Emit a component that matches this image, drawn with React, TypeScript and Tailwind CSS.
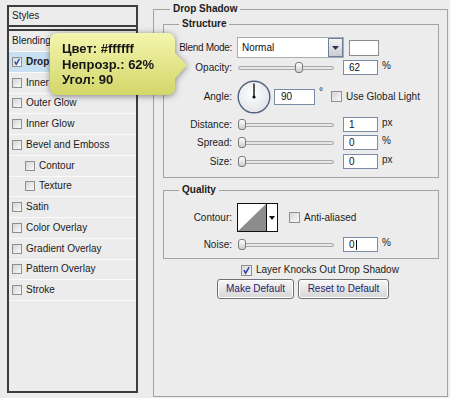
import React from "react";

const Check = ({ checked = false, small = false }: { checked?: boolean; small?: boolean }) => (
  <div
    className={
      small
        ? "relative shrink-0 w-[10px] h-[10px] border border-[#8e8f8f] bg-gradient-to-br from-[#d6d6d6] to-[#f9f9f9]"
        : "relative shrink-0 w-[11px] h-[11px] border border-[#8e8f8f] bg-gradient-to-br from-[#d6d6d6] to-[#f9f9f9]"
    }
  >
    {checked && (
      <svg viewBox="0 0 10 10" className="absolute inset-0 w-full h-full">
        <path d="M2.2 4.6 L4 8 L8 1.2" fill="none" stroke="#2a44a8" strokeWidth="1.7" />
      </svg>
    )}
  </div>
);

const Slider = ({ pos }: { pos: number }) => (
  <div className="relative w-[96px] h-[11px] shrink-0">
    <div className="absolute left-0 right-0 top-[4px] h-[4px] rounded-full border border-[#a9a9a9] bg-[#e6e6e6]" />
    <div
      className="absolute top-0 w-[8px] h-[11px] rounded-[3px] border border-[#7a7a7a] bg-gradient-to-b from-white to-[#cdcdcd]"
      style={{ left: pos }}
    />
  </div>
);

const Field = ({ children, cls }: { children: React.ReactNode; cls: string }) => (
  <div className={`shrink-0 border border-[#7b8ba5] bg-white flex items-center text-[#111] ${cls}`}>{children}</div>
);

const Label = ({ children, cls = "" }: { children: React.ReactNode; cls?: string }) => (
  <div className={`w-[68px] shrink-0 text-right ${cls}`}>{children}</div>
);

const SliderRow = ({ label, value, unit, pos, cls }: { label: string; value: React.ReactNode; unit: string; pos: number; cls: string }) => (
  <div className={`flex items-center h-[15px] ${cls}`}>
    <Label>{label}</Label>
    <div className="ml-[6px]">
      <Slider pos={pos} />
    </div>
    <Field cls="ml-[9px] w-[35px] h-[15px] pl-[5px]">{value}</Field>
    <div className="ml-[4px] self-start mt-[1px]">{unit}</div>
  </div>
);

const Legend = ({ children, cls }: { children: React.ReactNode; cls: string }) => (
  <div className={`absolute -top-[7px] px-[3px] bg-[#ececec] font-bold leading-[12px] ${cls}`}>{children}</div>
);

const StyleRow = ({ text, indent = false, active = false, bold = false }: { text: string; indent?: boolean; active?: boolean; bold?: boolean }) => (
  <div
    className={`h-[20.75px] shrink-0 flex items-center border-b border-[#fafafa] ${active ? "bg-[#c8e0f3]" : ""} ${
      indent ? "pl-[16px]" : "pl-[3px]"
    }`}
  >
    <Check small checked={active} />
    <span className={`ml-[4px] ${bold ? "font-bold" : ""}`}>{text}</span>
  </div>
);

export default function App() {
  return (
    <div className="relative w-[450px] h-[398px] overflow-hidden bg-[#ececec] flex items-start font-['Liberation_Sans',Arial,sans-serif] text-[10px] text-[#1b1b1b] leading-none">
      {/* Left styles panel */}
      <div className="ml-[7px] mt-[5px] w-[131px] h-[388px] border-2 border-[#3d3d3d] bg-[#ececec] flex flex-col shrink-0">
        <div className="h-[20px] shrink-0 flex items-center pl-[3px] border-b-2 border-[#3d3d3d]">Styles</div>
        <div className="h-[2px] shrink-0" />
        <div className="h-[23px] shrink-0 flex items-center pl-[3px] border-t-2 border-[#3d3d3d] border-b border-b-[#fafafa]">Blending Options: Default</div>
        <StyleRow text="Drop Shadow" active bold />
        <StyleRow text="Inner Shadow" />
        <StyleRow text="Outer Glow" />
        <StyleRow text="Inner Glow" />
        <StyleRow text="Bevel and Emboss" />
        <StyleRow text="Contour" indent />
        <StyleRow text="Texture" indent />
        <StyleRow text="Satin" />
        <StyleRow text="Color Overlay" />
        <StyleRow text="Gradient Overlay" />
        <StyleRow text="Pattern Overlay" />
        <StyleRow text="Stroke" />
      </div>

      {/* Main Drop Shadow group */}
      <div className="relative ml-[15px] mt-[9px] w-[295px] h-[388px] border border-[#a3a3a3] shrink-0 pt-[14px] pl-[9px] pr-[8px] flex flex-col">
        <Legend cls="left-[16px]">Drop Shadow</Legend>

        {/* Structure */}
        <div className="relative h-[154px] border border-[#a3a3a3] shrink-0 flex flex-col">
          <Legend cls="left-[15px]">Structure</Legend>

          <div className="flex items-center h-[21px] mt-[12px]">
            <Label cls="tracking-[-0.3px]">Blend Mode:</Label>
            <div className="ml-[5px] w-[107px] h-[21px] border border-[#a7adb5] bg-white flex items-stretch">
              <div className="flex-1 flex items-center pl-[4px] text-[#111]">Normal</div>
              <div className="w-[15px] border border-[#6f7f99] bg-gradient-to-b from-[#f4f4f4] to-[#c9ccd2] flex items-center justify-center">
                <svg width="7" height="4" viewBox="0 0 7 4">
                  <path d="M0 0 L7 0 L3.5 4 Z" fill="#2b3550" />
                </svg>
              </div>
            </div>
            <div className="ml-[5px] w-[30px] h-[16px] border border-[#8a8a8a] bg-white" />
          </div>

          <SliderRow label="Opacity:" value="62" unit="%" pos={57} cls="mt-[2px]" />

          <div className="flex items-center h-[33px] mt-[5px]">
            <Label>Angle:</Label>
            <svg width="34" height="34" viewBox="0 0 34 34" className="ml-[5px] shrink-0">
              <defs>
                <radialGradient id="dialg" cx="45%" cy="40%" r="60%">
                  <stop offset="0%" stopColor="#ffffff" />
                  <stop offset="100%" stopColor="#e2e4e8" />
                </radialGradient>
              </defs>
              <circle cx="17" cy="17" r="15.8" fill="url(#dialg)" stroke="#50607e" strokeWidth="1.4" />
              <line x1="17" y1="17" x2="17" y2="3.5" stroke="#111" strokeWidth="1.4" />
              <circle cx="17" cy="17" r="1.6" fill="#111" />
            </svg>
            <Field cls="ml-[3px] w-[41px] h-[16px] pl-[6px]">90</Field>
            <div className="ml-[4px] self-start mt-[7px]">°</div>
            <div className="ml-[8px]">
              <Check />
            </div>
            <div className="ml-[4px]">Use Global Light</div>
          </div>

          <SliderRow label="Distance:" value="1" unit="px" pos={0} cls="mt-[4px]" />
          <SliderRow label="Spread:" value="0" unit="%" pos={0} cls="mt-[3px]" />
          <SliderRow label="Size:" value="0" unit="px" pos={0} cls="mt-[4px]" />
        </div>

        {/* Quality */}
        <div className="relative h-[69px] mt-[12px] border border-[#a3a3a3] shrink-0 flex flex-col">
          <Legend cls="left-[15px]">Quality</Legend>
          <div className="flex items-center h-[29px] mt-[12px]">
            <Label>Contour:</Label>
            <div className="ml-[5px] w-[41px] h-[29px] border border-[#111] bg-white flex">
              <svg width="28" height="27" viewBox="0 0 28 27" className="shrink-0">
                <rect x="0" y="0" width="28" height="27" fill="#ffffff" />
                <path d="M0 27 L28 0 L28 27 Z" fill="#8c8c8c" />
              </svg>
              <div className="flex-1 border-l border-[#111] flex items-center justify-center">
                <svg width="6" height="4" viewBox="0 0 6 4">
                  <path d="M0 0 L6 0 L3 4 Z" fill="#111" />
                </svg>
              </div>
            </div>
            <div className="ml-[11px]">
              <Check />
            </div>
            <div className="ml-[4px]">Anti-aliased</div>
          </div>
          <SliderRow
            label="Noise:"
            value={
              <span className="flex items-center">
                0<span className="inline-block w-[1px] h-[10px] bg-[#111] ml-[1px]" />
              </span>
            }
            unit="%"
            pos={0}
            cls="mt-[5px]"
          />
        </div>

        <div className="flex items-center h-[12px] mt-[5px] ml-[78px]">
          <Check checked />
          <div className="ml-[4px]">Layer Knocks Out Drop Shadow</div>
        </div>

        <div className="flex mt-[3px] ml-[54px] gap-[4px]">
          <div className="w-[77px] h-[20px] rounded-[3px] border border-[#707070] bg-gradient-to-b from-[#f7f7f7] to-[#d6d6d6] shadow-[inset_0_0_0_1px_#ffffff] flex items-center justify-center text-[#1d2670]">
            Make Default
          </div>
          <div className="w-[91px] h-[20px] rounded-[3px] border border-[#707070] bg-gradient-to-b from-[#f7f7f7] to-[#d6d6d6] shadow-[inset_0_0_0_1px_#ffffff] flex items-center justify-center text-[#1d2670]">
            Reset to Default
          </div>
        </div>
      </div>

      {/* Tooltip */}
      <div className="absolute left-[50px] top-[33px] w-[125px] h-[62px] drop-shadow-[0_1px_3px_rgba(0,0,0,0.45)]">
        <div className="w-full h-full rounded-[7px] bg-gradient-to-b from-[#f4f5ad] to-[#d3d668] pl-[12px] pt-[8px] text-[13px] leading-[15.5px] font-bold text-[#151515]">
          <div>Цвет: #ffffff</div>
          <div>Непрозр.: 62%</div>
          <div>Угол: 90</div>
        </div>
        <svg width="14" height="62" viewBox="0 0 14 62" className="absolute left-[124px] top-0">
          <defs>
            <linearGradient id="tipg" x1="0" y1="0" x2="0" y2="62" gradientUnits="userSpaceOnUse">
              <stop offset="0" stopColor="#f4f5ad" />
              <stop offset="1" stopColor="#d3d668" />
            </linearGradient>
          </defs>
          <path d="M0 19 L13 32 L0 47 Z" fill="url(#tipg)" />
        </svg>
      </div>
    </div>
  );
}
